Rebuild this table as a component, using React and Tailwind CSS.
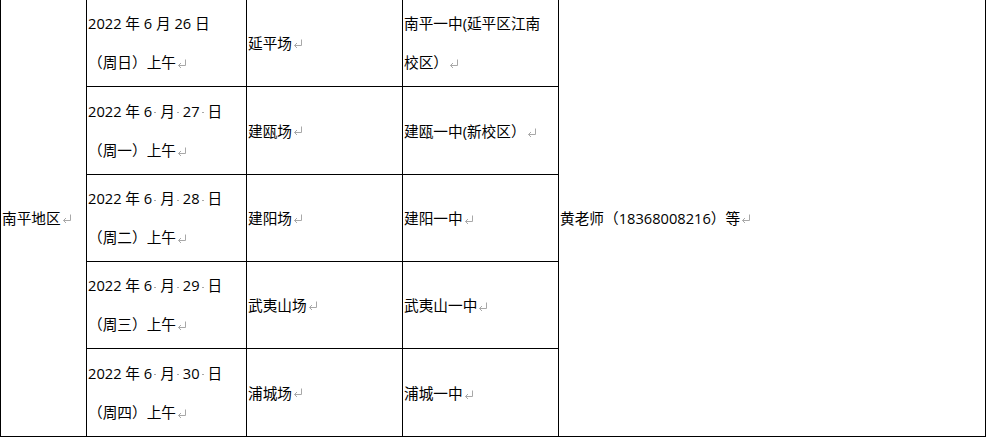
import React from 'react'

const Mark = () => (
  <svg
    width="10"
    height="9"
    viewBox="0 0 10 9"
    className="inline-block align-baseline ml-px"
    fill="none"
    stroke="#a8a8a8"
    strokeWidth="1"
  >
    <path d="M8.5 0.5 V6.5 H1.5" />
    <path d="M4 4 L1.5 6.5 L4 9" />
  </svg>
)

const Dot = () => (
  <span className="inline-block w-[8px] align-middle">
    <span className="block w-[2px] h-px bg-[#a8a8a8] ml-[2px]" />
  </span>
)

const rows = [
  { day: '26', week: '周日', dots: false, venue: '延平场', school: 'jn', h: 'h-[87px]' },
  { day: '27', week: '周一', dots: true, venue: '建瓯场', school: '建瓯一中(新校区）', h: 'h-[88px]' },
  { day: '28', week: '周二', dots: true, venue: '建阳场', school: '建阳一中', h: 'h-[87px]' },
  { day: '29', week: '周三', dots: true, venue: '武夷山场', school: '武夷山一中', h: 'h-[87px]' },
  { day: '30', week: '周四', dots: true, venue: '浦城场', school: '浦城一中', h: 'h-[88px]' },
]

const DateCell = ({ day, week, dots }) => (
  <div className="leading-[39px]">
    <div className="whitespace-nowrap">
      {dots ? (
        <>
          2022 年 6<Dot />月<Dot />{day}<Dot />日
        </>
      ) : (
        <>2022 年 6 月 {day} 日</>
      )}
    </div>
    <div className="whitespace-nowrap">
      （{week}）上午
      <Mark />
    </div>
  </div>
)

export default function App() {
  return (
    <div
      className="w-[986px] h-[438px] bg-white text-black text-[14.67px] overflow-hidden"
      style={{ fontFamily: '"Open Sans", "Noto Sans CJK SC", sans-serif' }}
    >
      <div className="grid grid-cols-[87px_160px_156px_156px_427px]">
        <div className="row-span-5 border-l border-r border-b border-black flex items-center pl-px whitespace-nowrap">
          南平地区
          <Mark />
        </div>
        {rows.map((r, i) => (
          <React.Fragment key={r.day}>
            <div className={`${r.h} border-r border-b border-black flex items-center pl-px`} style={{ gridColumn: 2, gridRow: i + 1 }}>
              <DateCell day={r.day} week={r.week} dots={r.dots} />
            </div>
            <div className={`${r.h} border-r border-b border-black flex items-center pl-px whitespace-nowrap`} style={{ gridColumn: 3, gridRow: i + 1 }}>
              {r.venue}
              <Mark />
            </div>
            <div className={`${r.h} border-r border-b border-black flex items-center pl-px whitespace-nowrap`} style={{ gridColumn: 4, gridRow: i + 1 }}>
              {r.school === 'jn' ? (
                <div className="leading-[39px]">
                  <div>南平一中(延平区江南</div>
                  <div>
                    校区）
                    <Mark />
                  </div>
                </div>
              ) : (
                <span>
                  {r.school}
                  <Mark />
                </span>
              )}
            </div>
          </React.Fragment>
        ))}
        <div className="border-r border-b border-black flex items-center pl-px whitespace-nowrap" style={{ gridColumn: 5, gridRow: '1 / span 5' }}>
          黄老师（18368008216）等
          <Mark />
        </div>
      </div>
    </div>
  )
}
